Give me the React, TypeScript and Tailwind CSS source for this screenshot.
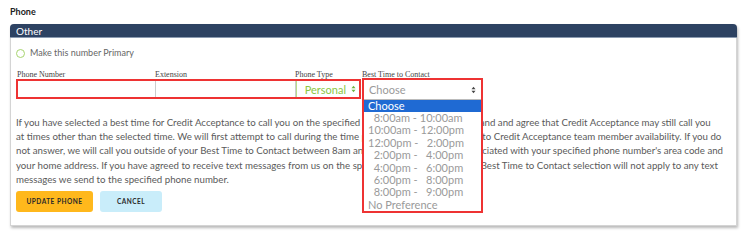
import React from "react";

const lines = [
  "If you have selected a best time for Credit Acceptance to call you on the specified phone number, you understand and agree that Credit Acceptance may still call you",
  "at times other than the selected time. We will first attempt to call during the time period you selected, subject to Credit Acceptance team member availability. If you do",
  "not answer, we will call you outside of your Best Time to Contact between 8am and 9pm in the time zone associated with your specified phone number's area code and",
  "your home address. If you have agreed to receive text messages from us on the specified phone number, your Best Time to Contact selection will not apply to any text",
  "messages we send to the specified phone number.",
];

const options = [
  "  8:00am - 10:00am",
  "10:00am - 12:00pm",
  "12:00pm -   2:00pm",
  "  2:00pm -   4:00pm",
  "  4:00pm -   6:00pm",
  "  6:00pm -   8:00pm",
  "  8:00pm -   9:00pm",
  "No Preference",
];

function Arrows({ color }: { color: string }) {
  return (
    <svg width="5" height="8" viewBox="0 0 5 8">
      <path d="M0.5 3.2 L2.5 0.8 L4.5 3.2 Z" fill={color} />
      <path d="M0.5 4.8 L2.5 7.2 L4.5 4.8 Z" fill={color} />
    </svg>
  );
}

export default function App() {
  return (
    <div className="relative w-[750px] h-[233px] bg-white overflow-hidden font-['Lato',sans-serif]">
      <div className="pl-[10px] pt-[6px] h-[24px] text-[9px] font-bold text-[#222] leading-[12px]">Phone</div>
      <div className="ml-[10px] w-[727px] h-[202px] rounded-t-[4px] border-x border-b border-[#d4d4d4] shadow-[1px_2px_3px_rgba(0,0,0,0.28)] bg-white">
        <div className="h-[14px] -mx-px rounded-t-[4px] bg-[#2d4262] text-white text-[10px] leading-[14px] pl-[6px] border-b border-[#8a9ab0]">
          Other
        </div>
        <div className="pl-[5px]">
          <div className="flex items-center gap-[5px] h-[10px] mt-[10px]">
            <div className="w-[9px] h-[9px] rounded-full border border-[#a7d46f]" />
            <span className="text-[9px] text-[#666] leading-[10px]">Make this number Primary</span>
          </div>
          <div className="flex mt-[12px] h-[10px] text-[8px] leading-[10px] text-[#444] font-['Liberation_Serif',serif]">
            <span className="w-[139px] pl-[1px]">Phone Number</span>
            <span className="w-[140px]">Extension</span>
            <span className="w-[67px]">Phone Type</span>
            <span>Best Time to Contact</span>
          </div>
          <div className="flex h-[20px] mt-[-1px]">
            <div className="flex w-[345px] h-[20px] border-2 border-[#ee3333]">
              <div className="w-[138px] h-full border-r border-[#cccccc]" />
              <div className="w-[140px] h-full border-r border-[#cccccc]" />
              <div className="flex-1 h-full border-l border-[#b9dc8c] flex items-center pl-[8px] pr-[3px] gap-[5px]">
                <span className="text-[11px] text-[#8cc63f] leading-none">Personal</span>
                <Arrows color="#6cb33f" />
              </div>
            </div>
          </div>
          <div className="mt-[16px] text-[9.7px] leading-[14.2px] text-[#5a5a5a]">
            {lines.map((l, i) => (
              <div key={i} className="whitespace-nowrap">{l}</div>
            ))}
          </div>
          <div className="flex gap-[7px] mt-[5px]">
            <button className="w-[77px] h-[21px] rounded-[3px] bg-[#ffb81c] text-[6.5px] font-bold tracking-[0.5px] text-[#2a2a2a]">
              UPDATE PHONE
            </button>
            <button className="w-[62px] h-[21px] rounded-[3px] bg-[#c9edfa] text-[6.5px] font-bold tracking-[0.5px] text-[#2a2a2a]">
              CANCEL
            </button>
          </div>
        </div>
      </div>

      <div className="absolute left-[362px] top-[78px] w-[121px] h-[135px] border-2 border-[#ee3333] bg-white">
        <div className="flex items-center justify-between h-[20px] px-[5px] border-b border-[#bbbbbb]">
          <span className="text-[11px] text-[#9a9a9a] leading-none">Choose</span>
          <Arrows color="#444" />
        </div>
        <div className="h-[12px] bg-[#1f6ad3] text-white text-[11px] leading-[12px] pl-[4px]">Choose</div>
        {options.map((o, i) => (
          <div key={i} className="h-[12.4px] whitespace-pre text-[11px] leading-[12.4px] text-[#9a9a9a] pl-[4px]">
            {o}
          </div>
        ))}
      </div>
    </div>
  );
}
